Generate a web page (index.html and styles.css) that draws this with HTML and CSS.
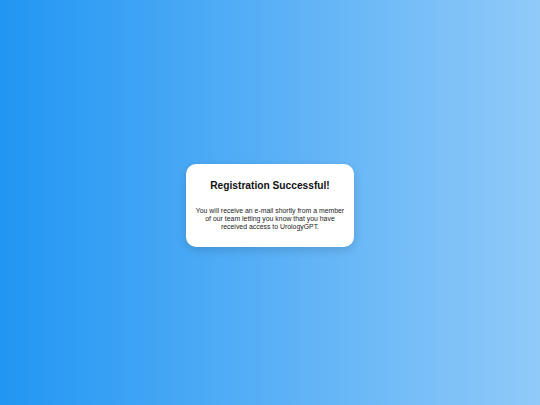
FILE: index.html
```html
<!DOCTYPE html>
<html>
<head>
<meta charset="utf-8">
<link rel="stylesheet" href="styles.css">
</head>
<body>
<div class="page">
  <div class="card">
    <h1 class="title">Registration Successful!</h1>
    <p class="message">You will receive an e-mail shortly from a member of our team letting you know that you have received access to UrologyGPT.</p>
  </div>
</div>
</body>
</html>
```
FILE: styles.css
```css
html, body {
  margin: 0;
  padding: 0;
  height: 100%;
}
body {
  font-family: "Liberation Sans", Arial, sans-serif;
}
.page {
  height: 100%;
  display: flex;
  align-items: center;
  justify-content: center;
  background: linear-gradient(to right, #2196f3, #90caf9);
}
.card {
  box-sizing: border-box;
  width: 168px;
  margin-top: 6px;
  background: #fff;
  border-radius: 10px;
  padding: 16px 9px 16px;
  text-align: center;
  box-shadow: 0 3px 10px rgba(0, 0, 0, 0.15);
}
.title {
  margin: 0 0 15px;
  font-size: 10.2px;
  line-height: 12px;
  font-weight: bold;
  color: #111;
}
.message {
  margin: 0;
  font-size: 6.9px;
  line-height: 8px;
  color: #222;
}
```
